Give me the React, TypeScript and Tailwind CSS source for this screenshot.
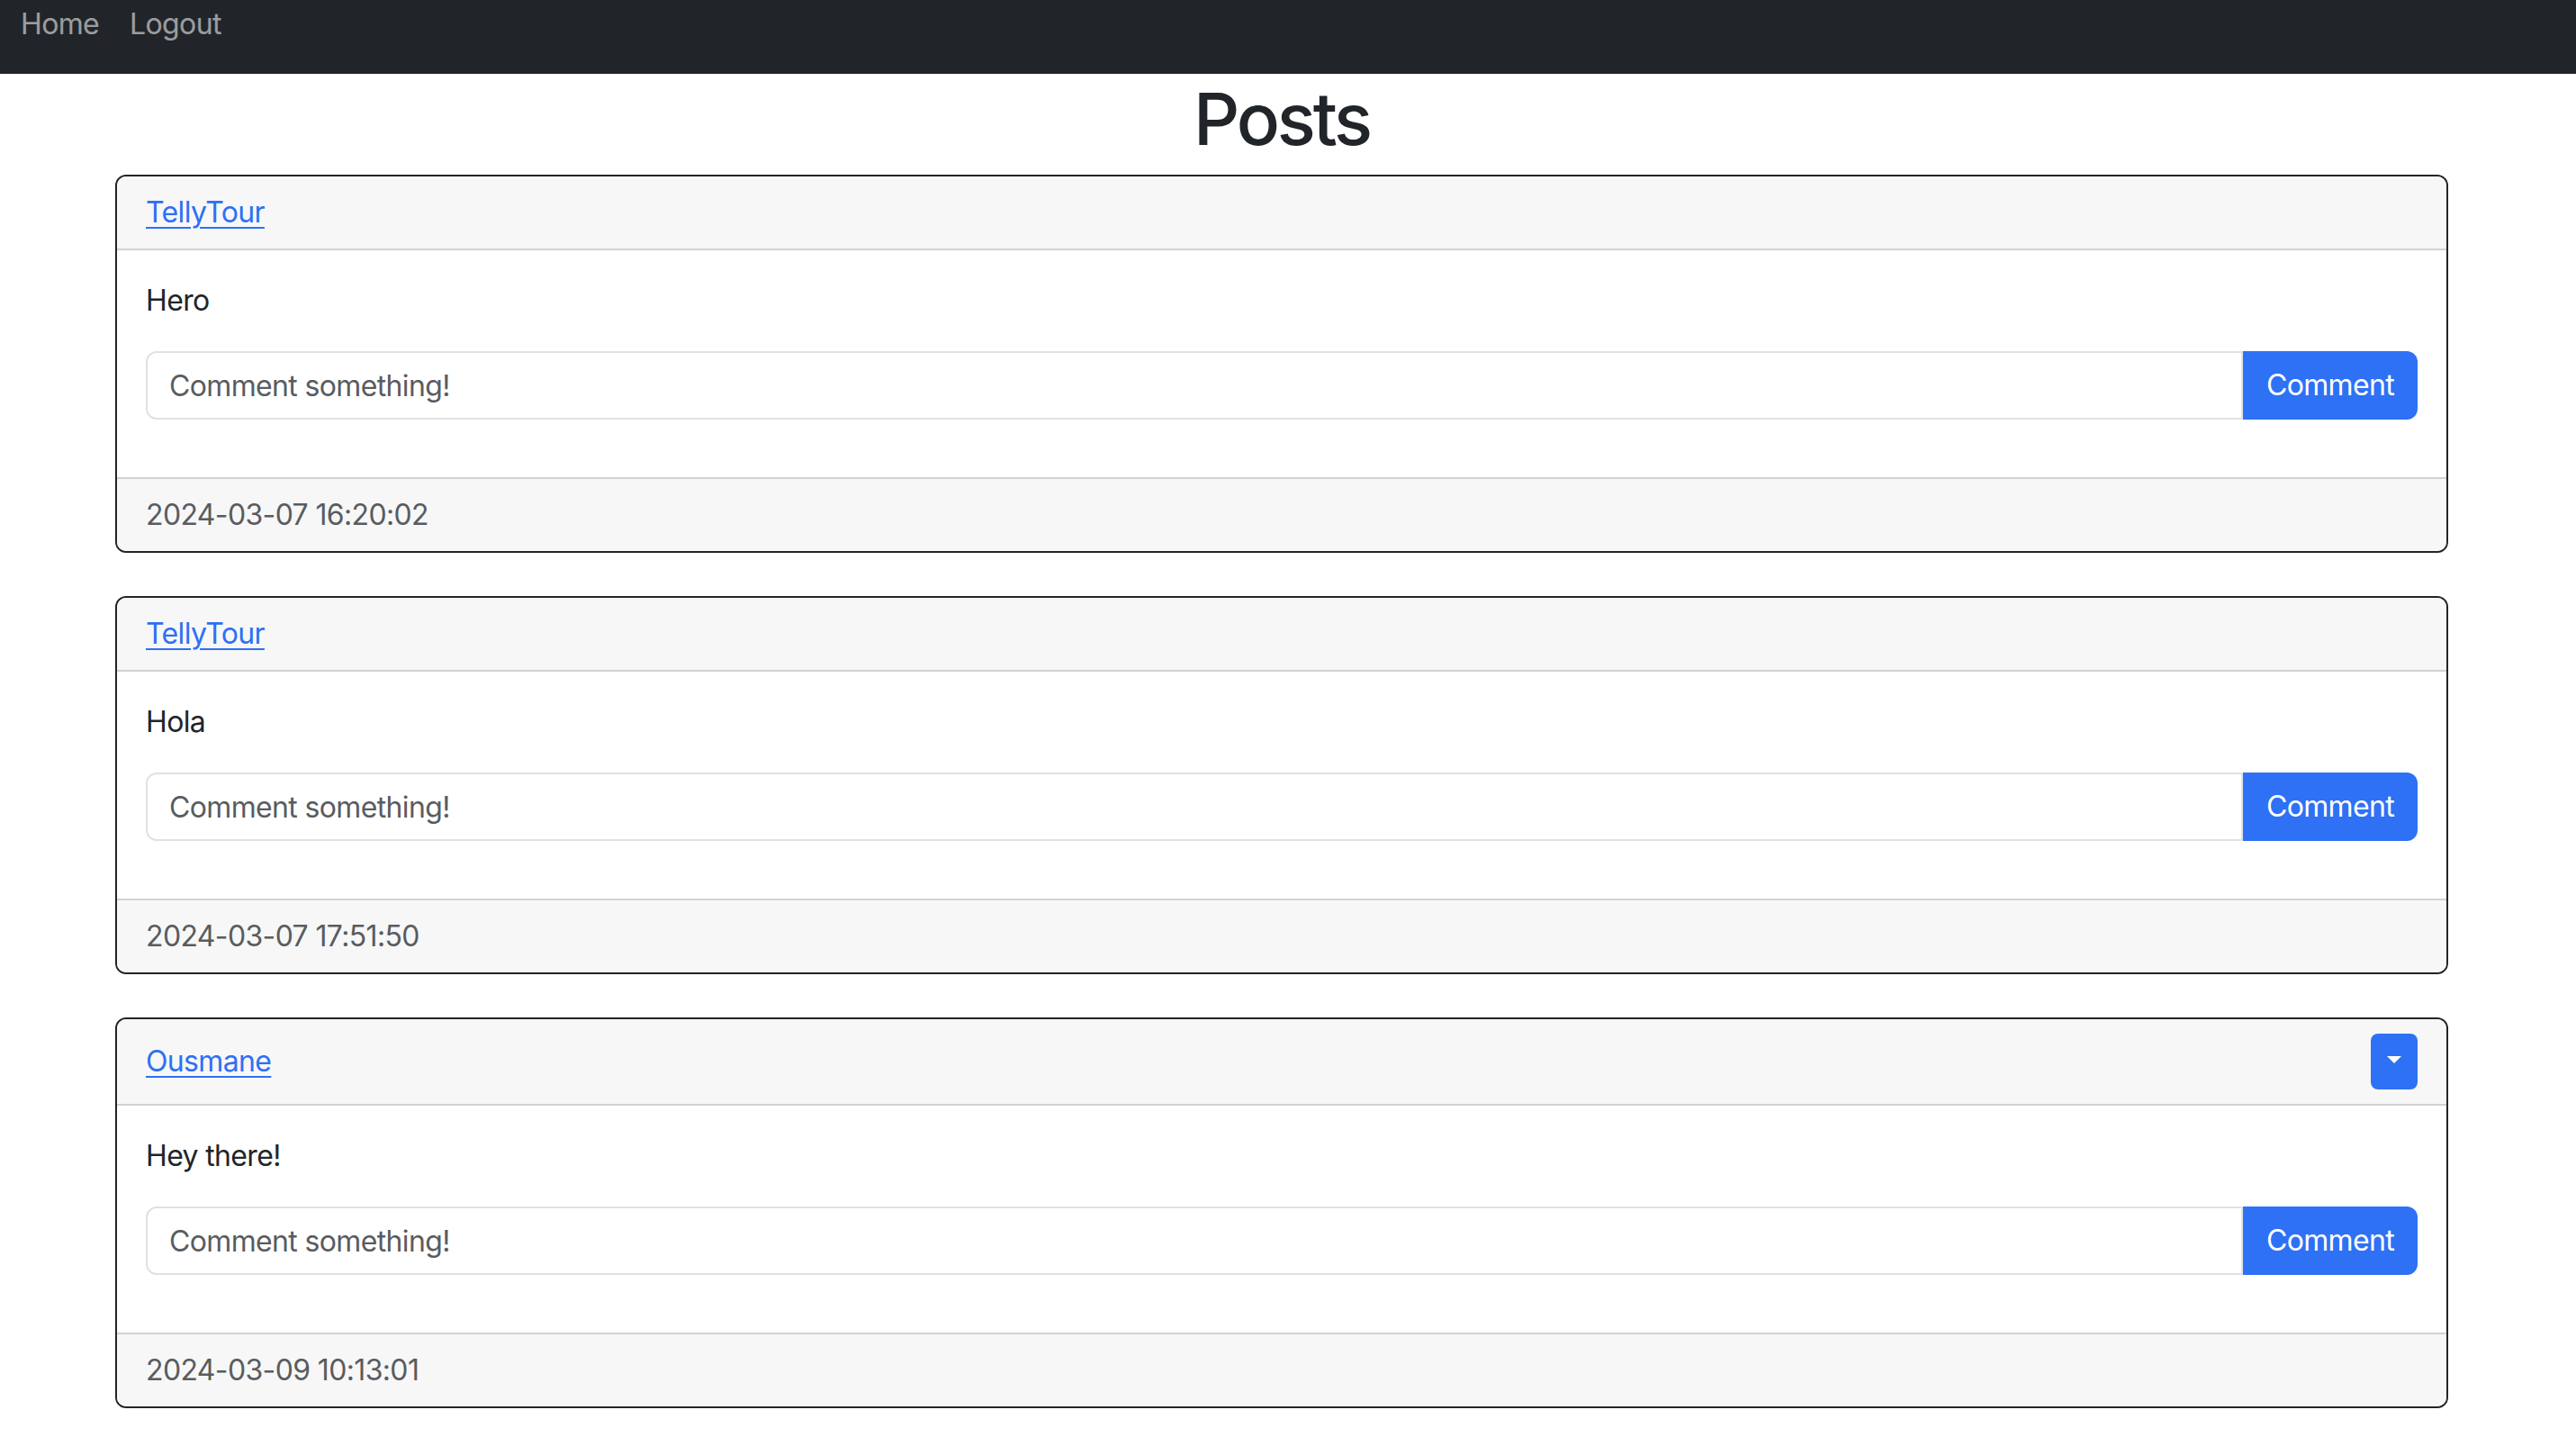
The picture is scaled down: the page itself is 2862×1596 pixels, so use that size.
const posts = [
  { id: 1, author: 'TellyTour', body: 'Hero', date: '2024-03-07 16:20:02', owner: false },
  { id: 2, author: 'TellyTour', body: 'Hola', date: '2024-03-07 17:51:50', owner: false },
  { id: 3, author: 'Ousmane', body: 'Hey there!', date: '2024-03-09 10:13:01', owner: true },
];

function PostCard({ post }: { post: (typeof posts)[number] }) {
  return (
    <div className="mb-[48px] rounded-[12px] border-2 border-[#212529] overflow-hidden">
      <div className="flex items-center justify-between bg-[#f7f7f7] border-b-2 border-[#d2d2d3] px-[32px] py-[16px]">
        <a href="#" className="text-[#2e70f5] underline underline-offset-[5px] decoration-2 leading-[48px]">
          {post.author}
        </a>
        {post.owner && (
          <button className="flex h-[62px] w-[52px] items-center justify-center rounded-[8px] bg-[#2e71f5]">
            <span className="mb-[4px] block h-0 w-0 border-x-[8px] border-t-[8px] border-x-transparent border-t-white" />
          </button>
        )}
      </div>
      <div className="bg-white px-[32px] py-[32px]">
        <p className="mb-[32px] leading-[48px] text-[#212529]">{post.body}</p>
        <div className="mb-[32px] flex">
          <input
            type="text"
            placeholder="Comment something!"
            className="h-[76px] flex-1 min-w-0 rounded-l-[12px] border-2 border-[#dee2e6] bg-white px-[24px] leading-[48px] tracking-[-0.02em] text-[#212529] placeholder:text-[#595c5f] outline-none"
          />
          <button className="h-[76px] w-[194px] rounded-r-[12px] bg-[#2e71f5] text-white leading-[48px]">
            Comment
          </button>
        </div>
      </div>
      <div className="bg-[#f7f7f7] border-t-2 border-[#d2d2d3] px-[32px] py-[16px]">
        <span className="leading-[48px] text-[#595c5f]">{post.date}</span>
      </div>
    </div>
  );
}

export default function App() {
  return (
    <div className="min-h-screen bg-white text-[32px] tracking-[-0.02em] text-[#212529] font-['Inter','Liberation_Sans',sans-serif]">
      <nav className="flex h-[82px] items-start gap-[34px] bg-[#212529] px-[23px] pt-[3px]">
        <a href="#" className="leading-[48px] text-white/55">
          Home
        </a>
        <a href="#" className="leading-[48px] text-white/55">
          Logout
        </a>
      </nav>

      <div className="w-[2848px]">
        <div className="mx-auto w-[2592px]">
          <h1 className="mt-[2px] mb-[14px] text-center text-[80px] font-medium leading-[96px] tracking-[-0.04em]">
            Posts
          </h1>
          {posts.map((p) => (
            <PostCard key={p.id} post={p} />
          ))}
        </div>
      </div>
    </div>
  );
}
